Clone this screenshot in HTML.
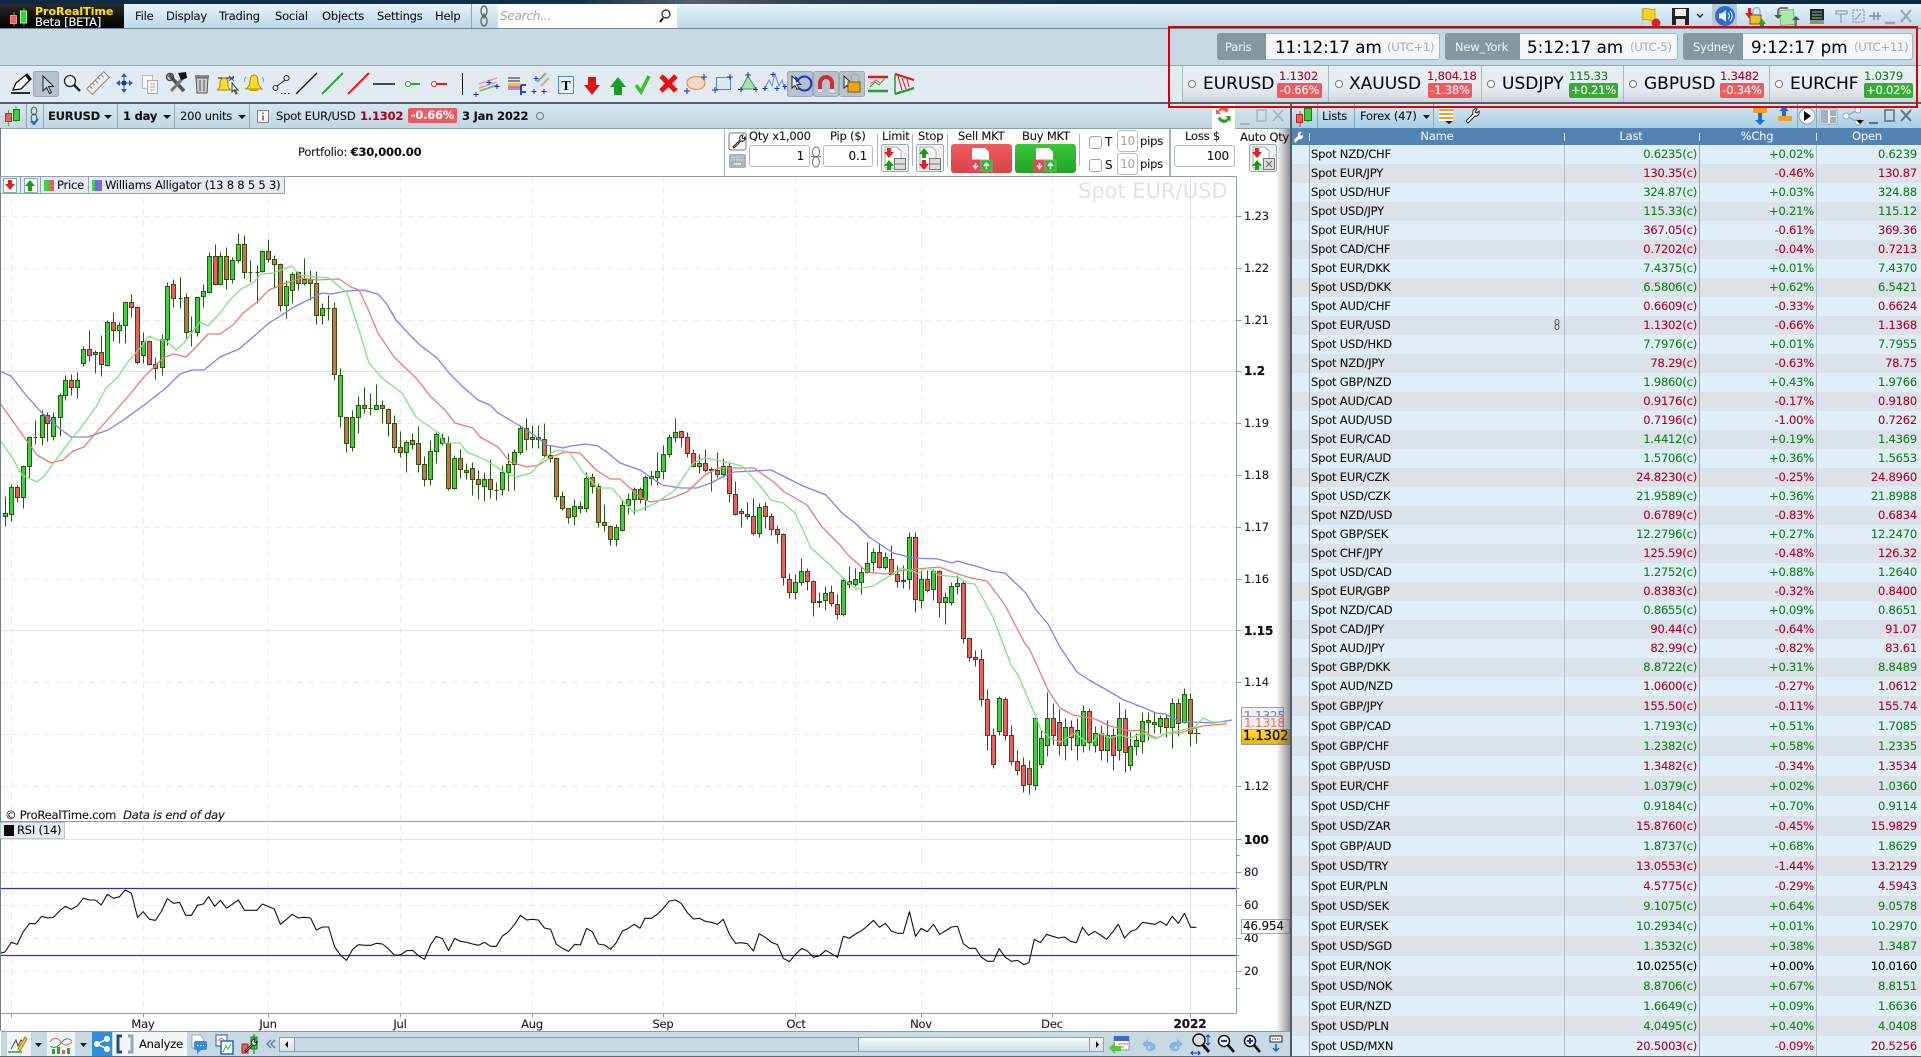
<!DOCTYPE html>
<html><head><meta charset="utf-8"><title>ProRealTime</title>
<style>
html,body{margin:0;padding:0;background:#fff}
body{width:1921px;height:1057px;position:relative;overflow:hidden;font:11.5px/14px "DejaVu Sans",sans-serif;letter-spacing:-.2px;-webkit-text-stroke:.1px;color:#111}
.b{position:absolute}
.t{position:absolute;white-space:nowrap;line-height:14px}
.sep{position:absolute;width:1px;background:#8fa6b4}
.inp{position:absolute;background:#fff;border:1px solid #b4bcc2;border-radius:3px;box-sizing:border-box;text-align:right;padding-right:5px;line-height:20px;font-size:12px}
.ck{position:absolute;background:#fff;border:1px solid #a0a8ae;border-radius:3px;box-sizing:border-box;width:13px;height:13px}
.r{position:relative;height:19px;line-height:19px;background:#e0eff7;width:629px}
.r:nth-child(even){background:#dce2e9}
.r:nth-child(n+30){height:20px;line-height:20px}
.r span{position:absolute;top:0;white-space:nowrap}
.n{left:19px;color:#111}
.x{right:224px}.y{right:107px}.z{right:4px}
.g span.x,.g span.y,.g span.z{color:#14801a}
.d span.x,.d span.y,.d span.z{color:#b40022}
.k span.x,.k span.y,.k span.z{color:#000}
.pr{color:#fff;border-radius:2px;text-align:center;position:absolute;height:15px;line-height:15px;box-sizing:border-box}
.rd{background:#ee5a5f}.gn{background:#35ad35}
.tk{position:absolute;font-size:16.7px;line-height:20px;white-space:nowrap;color:#0a0a14;letter-spacing:0}
.ax{position:absolute;left:1244px;color:#22102e;line-height:14px}
.bx{font-weight:bold;font-size:12px;color:#111;letter-spacing:-.1px;-webkit-text-stroke:.25px}
.mo{position:absolute;top:1017px;line-height:14px;transform:translateX(-50%);color:#22102e}
</style></head><body>

<!-- top strip -->
<div class="b" style="left:0;top:0;width:1921px;height:4px;background:linear-gradient(90deg,#0c2a44 0,#12304a 30%,#55606c 36%,#30404f 42%,#0e2c46 60%,#0d2a42 100%)"></div>
<!-- menu bar -->
<div class="b" style="left:0;top:4px;width:1921px;height:24px;background:linear-gradient(#e6f4fb,#bdd8e6)"></div>
<div class="b" style="left:0;top:4px;width:124px;height:24px;background:linear-gradient(#2a2a2a,#000)"></div>
<div class="b" style="left:0;top:28px;width:1921px;height:1px;background:#6f8796"></div>
<div class="b" style="left:498px;top:4px;width:179px;height:24px;background:#fff"></div>
<div class="sep" style="left:471px;top:4px;height:24px"></div>
<!-- empty bar + toolbar -->
<div class="b" style="left:0;top:29px;width:1921px;height:36px;background:#c7d9e3"></div>
<div class="b" style="left:0;top:65px;width:1921px;height:1px;background:#94a6b1"></div>
<div class="b" style="left:0;top:66px;width:1921px;height:36px;background:#e3ebf2"></div>
<div class="b" style="left:0;top:102px;width:1921px;height:2px;background:#4f5e69"></div>
<!-- ticker bg -->
<div class="b" style="left:1182px;top:66px;width:739px;height:36px;background:linear-gradient(#e7eef3 60%,#cdd5db)"></div>
<div class="sep" style="left:1182px;top:66px;height:36px;background:#aab8c1"></div>
<div class="sep" style="left:1328px;top:66px;height:36px;background:#aab8c1"></div>
<div class="sep" style="left:1481px;top:66px;height:36px;background:#aab8c1"></div>
<div class="sep" style="left:1623px;top:66px;height:36px;background:#aab8c1"></div>
<div class="sep" style="left:1769px;top:66px;height:36px;background:#aab8c1"></div>
<!-- clocks -->
<div class="b" style="left:1217px;top:33px;width:223px;height:27px;background:#f4f7f9;border:1px solid #a8b5bd;border-radius:3px;box-sizing:border-box"></div>
<div class="b" style="left:1217px;top:33px;width:49px;height:27px;background:#85979f;border-radius:3px 0 0 3px"></div>
<div class="b" style="left:1445px;top:33px;width:233px;height:27px;background:#f4f7f9;border:1px solid #a8b5bd;border-radius:3px;box-sizing:border-box"></div>
<div class="b" style="left:1445px;top:33px;width:75px;height:27px;background:#85979f;border-radius:3px 0 0 3px"></div>
<div class="b" style="left:1683px;top:33px;width:230px;height:27px;background:#f4f7f9;border:1px solid #a8b5bd;border-radius:3px;box-sizing:border-box"></div>
<div class="b" style="left:1683px;top:33px;width:60px;height:27px;background:#85979f;border-radius:3px 0 0 3px"></div>
<!-- chart tab bar -->
<div class="b" style="left:0;top:104px;width:1290px;height:24px;background:linear-gradient(#d6e6ee,#c2d7e2)"></div>
<div class="b" style="left:0;top:128px;width:1290px;height:1px;background:#8ba2b0"></div>
<div class="b" style="left:1212px;top:104px;width:23px;height:25px;background:#fff"></div>
<div class="sep" style="left:26px;top:104px;height:24px"></div><div class="sep" style="left:43px;top:104px;height:24px"></div>
<div class="sep" style="left:117px;top:104px;height:24px"></div><div class="sep" style="left:174px;top:104px;height:24px"></div><div class="sep" style="left:249px;top:104px;height:24px"></div>

<!-- chart -->
<svg class="b" style="left:0;top:0" width="1921" height="1057" viewBox="0 0 1921 1057">
<g stroke="#e9e9ee" stroke-width="1" stroke-dasharray="6 5" fill="none" transform="translate(.5,.5)">
<path d="M0 216H1236M0 268H1236M0 320H1236M0 423H1236M0 475H1236M0 527H1236M0 579H1236M0 682H1236M0 734H1236M0 786H1236"/>
<path d="M0 872H1236M0 905H1236M0 938H1236M0 971H1236"/>
<path d="M11 176V1013M143 176V1013M268 176V1013M400 176V1013M532 176V1013M663 176V1013M795 176V1013M921 176V1013M1052 176V1013"/>
</g>
<g stroke="#e0e0ea" fill="none" transform="translate(.5,.5)"><path d="M0 371H1236M0 630H1236M0 839H1236M1190 176V1013"/></g>

<!-- wicks -->
<g transform="translate(.5,.5)">
<path fill="none" stroke="#265a10" stroke-width="1" d="M5 496V526M11 484V521M17 485V502M23 465V508M29 436V478M35 420V444M33 437h4M42 410V445M47 412V441M53 412V440M60 393V436M65 375V400M71 374V395M77 372V398M83 346V366M89 330V361M95 350V373M101 335V376M107 320V366M113 312V341M119 322V343M125 302V343M131 294V317M137 306V364M143 332V363M149 340V365M155 357V379M162 334V375M167 282V345M173 279V307M180 277V308M178 298h4M186 293V338M191 316V346M189 331h4M197 297V336M203 284V307M209 252V293M215 244V285M220 252V285M226 247V289M232 257V283M238 233V263M244 235V278M250 260V282M248 272h4M257 265V303M255 272h4M262 250V272M268 239V262M274 255V287M280 263V311M286 280V318M292 272V303M298 271V290M304 258V285M310 270V300M316 271V324M322 303V324M328 295V320M326 308h4M334 302V380M340 368V427M346 417V452M352 410V451M358 396V433M364 387V413M370 393V415M368 408h4M376 384V409M382 400V423M388 408V436M394 415V452M400 431V457M406 440V472M412 433V449M418 426V472M424 456V486M430 440V485M436 432V463M442 433V445M448 436V490M454 455V489M460 449V478M466 463V479M472 462V495M478 470V499M484 472V501M490 459V498M496 482V500M494 490h4M502 465V495M508 453V491M514 449V490M520 425V454M526 418V450M532 425V448M538 425V448M544 423V458M550 445V462M556 457V500M562 491V510M568 508V523M574 499V525M580 501V513M586 472V512M592 473V493M598 483V527M604 504V531M610 525V545M616 524V546M622 500V531M628 493V514M634 487V514M640 487V503M645 475V510M651 470V485M657 452V485M663 445V479M669 434V457M675 418V442M681 430V447M687 432V457M693 449V467M699 454V473M705 449V472M711 467V491M717 452V477M723 458V477M729 463V502M735 481V515M741 508V527M747 502V519M753 498V535M759 503V537M765 502V528M771 513V535M777 525V543M783 533V585M789 573V598M795 574V599M801 558V585M807 568V590M813 580V616M819 592V607M825 586V610M831 585V606M837 594V619M843 579V616M849 566V588M855 568V586M861 567V594M867 542V573M873 548V571M879 543V568M885 552V569M891 545V575M897 565V587M903 565V588M909 532V589M915 532V612M921 570V608M927 570V592M933 569V600M939 570V617M945 592V624M951 582V605M957 575V594M963 581V643M969 637V661M975 650V666M981 649V706M987 689V750M993 728V768M999 696V735M1005 697V740M1011 725V765M1017 750V775M1023 757V792M1029 760V794M1035 718V790M1041 730V768M1047 692V756M1053 703V745M1059 709V755M1065 718V760M1071 720V750M1077 718V760M1083 705V752M1089 708V750M1095 726V752M1101 725V760M1107 720V762M1113 728V770M1119 702V760M1125 709V772M1130 732V770M1136 733V755M1142 712V753M1148 712V740M1154 712V733M1160 715V733M1166 715V737M1172 698V748M1178 698V736M1184 688V723M1190 693V746M1196 728V743M1193 733h7"/>
<!-- green bodies -->
<path fill="#3ecf3e" stroke="#265a10" d="M3 513h4V516h-4zM9 487h4V514h-4zM21 466h4V497h-4zM27 437h4V466h-4zM40 415h4V437h-4zM51 417h4V436h-4zM58 395h4V417h-4zM63 380h4V395h-4zM75 380h4V387h-4zM81 349h4V363h-4zM93 352h4V354h-4zM105 322h4V365h-4zM117 325h4V330h-4zM123 302h4V325h-4zM141 341h4V355h-4zM160 339h4V367h-4zM165 286h4V339h-4zM195 297h4V332h-4zM201 291h4V296h-4zM207 256h4V292h-4zM218 256h4V284h-4zM230 260h4V279h-4zM236 244h4V260h-4zM260 251h4V271h-4zM284 286h4V305h-4zM290 274h4V290h-4zM302 279h4V283h-4zM320 308h4V315h-4zM338 375h4V416h-4zM350 417h4V447h-4zM356 405h4V417h-4zM374 405h4V409h-4zM404 442h4V452h-4zM428 451h4V479h-4zM434 434h4V451h-4zM452 458h4V488h-4zM482 479h4V486h-4zM500 472h4V489h-4zM506 464h4V472h-4zM512 452h4V464h-4zM518 428h4V452h-4zM530 437h4V439h-4zM572 506h4V516h-4zM584 478h4V508h-4zM614 527h4V539h-4zM620 505h4V530h-4zM626 499h4V505h-4zM632 489h4V499h-4zM643 477h4V499h-4zM649 476h4V478h-4zM655 471h4V477h-4zM661 454h4V471h-4zM667 437h4V454h-4zM673 432h4V437h-4zM697 463h4V466h-4zM721 466h4V474h-4zM757 507h4V533h-4zM793 582h4V592h-4zM799 571h4V582h-4zM817 601h4V602h-4zM823 593h4V600h-4zM841 580h4V614h-4zM853 579h4V584h-4zM859 572h4V582h-4zM865 563h4V572h-4zM871 552h4V562h-4zM883 557h4V567h-4zM901 580h4V581h-4zM907 537h4V579h-4zM919 579h4V600h-4zM931 571h4V589h-4zM943 597h4V602h-4zM949 586h4V602h-4zM955 583h4V586h-4zM997 698h4V731h-4zM1033 718h4V785h-4zM1039 738h4V764h-4zM1045 718h4V745h-4zM1063 727h4V745h-4zM1075 730h4V745h-4zM1081 711h4V745h-4zM1093 733h4V745h-4zM1105 735h4V750h-4zM1117 718h4V750h-4zM1128 746h4V765h-4zM1134 740h4V746h-4zM1140 721h4V741h-4zM1158 718h4V726h-4zM1170 703h4V727h-4zM1182 694h4V722h-4z"/>
<!-- red bodies -->
<path fill="#e8605c" stroke="#265a10" d="M15 487h4V497h-4zM45 415h4V423h-4zM69 380h4V387h-4zM87 349h4V355h-4zM99 352h4V364h-4zM111 322h4V330h-4zM129 302h4V307h-4zM135 307h4V362h-4zM147 341h4V364h-4zM153 364h4V368h-4zM171 284h4V298h-4zM184 297h4V332h-4zM213 256h4V284h-4zM224 256h4V279h-4zM242 244h4V272h-4zM266 251h4V259h-4zM272 259h4V264h-4zM278 264h4V305h-4zM296 272h4V283h-4zM308 279h4V283h-4zM314 283h4V315h-4zM332 308h4V374h-4zM344 417h4V443h-4zM362 405h4V408h-4zM380 405h4V408h-4zM386 409h4V423h-4zM392 423h4V447h-4zM398 447h4V452h-4zM410 440h4V444h-4zM416 443h4V464h-4zM422 464h4V479h-4zM440 438h4V443h-4zM446 443h4V488h-4zM458 458h4V469h-4zM464 470h4V472h-4zM470 468h4V479h-4zM476 479h4V484h-4zM488 479h4V489h-4zM524 428h4V439h-4zM536 437h4V439h-4zM542 439h4V455h-4zM548 455h4V458h-4zM554 458h4V496h-4zM560 496h4V508h-4zM566 508h4V517h-4zM578 506h4V508h-4zM590 477h4V486h-4zM596 486h4V522h-4zM602 522h4V525h-4zM608 526h4V539h-4zM638 489h4V499h-4zM679 431h4V437h-4zM685 437h4V453h-4zM691 453h4V466h-4zM703 463h4V470h-4zM709 469h4V470h-4zM715 470h4V474h-4zM727 466h4V493h-4zM733 494h4V514h-4zM739 511h4V513h-4zM745 514h4V516h-4zM751 516h4V533h-4zM763 506h4V516h-4zM769 516h4V529h-4zM775 529h4V534h-4zM781 534h4V577h-4zM787 579h4V592h-4zM805 571h4V581h-4zM811 581h4V602h-4zM829 592h4V603h-4zM835 604h4V614h-4zM847 581h4V584h-4zM877 552h4V567h-4zM889 559h4V574h-4zM895 574h4V581h-4zM913 537h4V599h-4zM925 579h4V590h-4zM937 571h4V602h-4zM961 583h4V638h-4zM967 638h4V657h-4zM973 657h4V659h-4zM979 659h4V699h-4zM985 699h4V735h-4zM991 735h4V764h-4zM1003 699h4V735h-4zM1009 735h4V761h-4zM1015 761h4V770h-4zM1021 765h4V785h-4zM1027 768h4V784h-4zM1051 718h4V735h-4zM1057 722h4V745h-4zM1069 727h4V737h-4zM1087 711h4V742h-4zM1099 733h4V750h-4zM1111 735h4V755h-4zM1123 718h4V752h-4zM1146 720h4V722h-4zM1152 722h4V724h-4zM1164 718h4V727h-4zM1176 703h4V723h-4zM1188 699h4V733h-4z"/>
</g>

<!-- alligator -->
<g fill="none" stroke-width="1.3" stroke-linejoin="round">
<polyline stroke="#8080ec" points="0,371 11,376 25,394 41,412 59,428 71,437 88,437 108,430 122,421 147,403 167,387 180,374 192,370 204,370 220,357 239,349 253,337 269,323 282,315 294,307 306,301 322,293 331,294 347,291 363,290 378,294 386,303 396,320 408,333 420,345 437,358 449,373 463,387 478,400 490,405 498,413 510,420 527,430 547,445 563,448 571,446 586,444 598,446 608,453 620,463 640,470 652,478 662,485 681,488 697,488 711,483 726,475 734,472 771,470 803,486 826,495 842,513 856,524 869,537 881,545 893,553 913,558 938,559 952,563 958,561 964,563 979,567 991,571 1005,573 1026,593 1036,610 1048,624 1060,647 1077,672 1089,680 1105,689 1124,700 1142,707 1156,713 1165,714 1180,722 1193,722 1213,723 1232,720"/>
<polyline stroke="#ea7a78" points="0,403 12,420 24,437 37,455 51,463 63,460 73,451 84,447 94,435 110,417 131,393 143,378 163,358 173,354 186,357 196,347 208,334 220,334 233,325 243,313 257,302 269,290 286,283 302,278 316,280 339,279 351,287 359,290 367,307 378,333 394,357 416,378 431,397 445,410 455,423 473,428 480,437 498,447 510,462 527,467 539,465 551,457 565,452 580,453 596,470 610,479 620,479 640,497 650,502 669,499 687,492 705,475 718,468 754,468 775,483 783,491 807,505 822,527 840,545 848,555 867,572 885,574 905,570 939,567 958,574 971,578 987,581 1005,605 1024,642 1030,650 1048,690 1060,708 1073,715 1095,719 1110,726 1130,731 1143,730 1150,735 1157,738 1167,733 1180,733 1190,730 1202,726 1212,725 1227,724"/>
<polyline stroke="#78e678" points="0,440 12,457 22,475 37,482 45,475 61,453 73,437 80,429 96,407 106,388 118,377 127,363 141,347 149,336 157,340 165,340 176,350 184,343 200,322 208,326 220,313 229,301 241,289 253,283 261,274 273,273 292,266 300,275 318,277 329,278 347,293 359,330 369,363 382,378 402,393 416,417 420,420 439,433 443,443 460,443 467,452 486,460 504,472 516,477 531,473 545,457 557,450 569,452 584,473 598,488 612,488 624,502 633,512 640,510 656,503 675,490 693,463 705,458 722,461 742,466 762,488 771,500 783,503 795,513 811,548 828,563 842,577 856,589 873,586 893,574 901,568 918,573 928,567 938,575 958,577 967,583 975,584 993,617 1011,665 1018,675 1036,717 1041,730 1050,738 1060,742 1075,733 1090,745 1100,733 1110,738 1120,735 1130,738 1143,733 1155,739 1167,733 1182,730 1195,727 1203,718 1212,722 1227,722"/>
</g>

<!-- RSI -->
<path d="M0 888.5H1236M0 955.5H1236" stroke="#2a2ad8" stroke-width="1.3" fill="none"/>
<g fill="none" stroke="#111" stroke-width="1.1" stroke-linejoin="round">
<polyline vector-effect="non-scaling-stroke" transform="translate(0,800) scale(.40816,.33333)" points="0,460 12,456 28,427 42,433 57,395 72,371 87,371 102,349 116,354 131,352 146,333 160,319 175,328 190,317 204,295 219,300 234,300 248,315 263,283 278,295 293,290 307,270 322,280 337,352 351,335 366,358 381,361 396,333 410,296 425,310 440,307 455,346 469,346 484,316 498,312 511,290 526,319 540,301 555,325 569,313 584,300 599,331 614,331 629,331 643,312 658,320 672,327 687,373 702,358 716,343 731,354 746,352 761,354 775,390 790,381 805,381 820,441 834,465 849,481 864,448 878,434 893,436 908,436 922,430 937,432 952,447 966,465 981,465 996,452 1011,451 1025,467 1040,478 1055,434 1069,409 1084,416 1099,452 1114,415 1128,424 1143,427 1158,432 1172,436 1187,427 1202,439 1216,439 1231,408 1246,395 1261,373 1275,346 1290,360 1304,358 1319,360 1334,384 1349,388 1363,433 1378,445 1393,454 1408,433 1422,435 1437,385 1451,395 1466,432 1481,435 1496,448 1510,428 1525,393 1539,385 1554,373 1568,385"/>
<polyline vector-effect="non-scaling-stroke" transform="translate(640,800) scale(.40816,.33333)" points="0,385 12,355 28,355 43,342 57,325 72,303 87,300 101,310 116,338 131,357 146,355 160,364 175,367 190,373 204,358 219,403 234,430 248,428 263,431 278,453 292,401 307,412 322,427 337,434 351,475 366,485 381,463 396,445 410,453 425,472 440,467 455,451 469,461 484,472 498,409 513,415 528,402 543,392 557,378 572,361 587,382 601,370 616,393 631,400 645,400 660,335 675,409 689,385 704,395 719,373 734,403 748,393 763,381 778,379 792,431 807,445 822,445 836,471 851,484 866,484 880,446 895,472 910,484 925,481 940,494 953,488 966,418 981,428 996,403 1011,409 1025,414 1040,411 1055,424 1069,428 1084,382 1099,406 1114,394 1128,405 1143,418 1158,396 1172,373 1187,414 1202,394 1216,388 1231,367 1246,370 1261,373 1275,364 1290,376 1304,349 1319,370 1334,340 1349,382 1363,382"/>
</g>

<!-- panel lines / axis -->
<g fill="none" stroke="#8f9ea8" transform="translate(.5,.5)">
<path d="M0 176H1236M0 821H1236M0 1013H1236M1236 176V1013"/>
<path d="M1236 216h5M1236 268h5M1236 320h5M1236 371h5M1236 423h5M1236 475h5M1236 527h5M1236 579h5M1236 630h5M1236 682h5M1236 786h5M1236 839h5M1236 855h3M1236 872h5M1236 888h3M1236 905h5M1236 938h5M1236 955h3M1236 971h5M1236 988h3M11 1013v4M143 1013v4M268 1013v4M400 1013v4M532 1013v4M663 1013v4M795 1013v4M921 1013v4M1052 1013v4M1190 1013v4"/>
</g>
<path d="M.5 128V1031" stroke="#6f7f8a" fill="none"/>
</svg>

<!-- chart text -->
<div class="t" style="left:1078px;top:177px;font-size:21px;line-height:28px;color:#dfe3ea;letter-spacing:0">Spot EUR/USD</div>
<div class="t" style="left:298px;top:145px;">Portfolio: <b>€30,000.00</b></div>

<!-- legend -->
<div class="b" style="left:0;top:176px;width:285px;height:18px;background:#e4ecf1;border:1px solid #8fa3b0;box-sizing:border-box"></div>
<div class="b" style="left:44px;top:180px;width:5px;height:11px;background:#4ccc4c"></div><div class="b" style="left:49px;top:180px;width:5px;height:11px;background:#e8605c"></div>
<div class="sep" style="left:40px;top:177px;height:16px"></div><div class="sep" style="left:20px;top:177px;height:16px"></div>
<div class="sep" style="left:88px;top:177px;height:16px"></div>
<div class="b" style="left:92px;top:180px;width:3px;height:11px;background:#4ccc4c"></div><div class="b" style="left:95px;top:180px;width:4px;height:11px;background:#6a6ae8"></div><div class="b" style="left:99px;top:180px;width:3px;height:11px;background:#a060c0"></div>
<div class="t" style="left:57px;top:178px">Price</div>
<div class="t" style="left:105px;top:178px;">Williams Alligator (13 8 8 5 5 3)</div>

<div class="t" style="left:5px;top:808px">© ProRealTime.com&nbsp; <i>Data is end of day</i></div>
<div class="b" style="left:0;top:822px;width:65px;height:17px;background:#e4ecf1;border:1px solid #b6c5cf;box-sizing:border-box"></div>
<div class="b" style="left:4px;top:825px;width:10px;height:11px;background:#000"></div>
<div class="t" style="left:17px;top:823px">RSI (14)</div>

<!-- axis labels -->
<div class="ax" style="top:209px">1.23</div><div class="ax" style="top:261px">1.22</div><div class="ax" style="top:313px">1.21</div>
<div class="ax bx" style="top:364px">1.2</div>
<div class="ax" style="top:416px">1.19</div><div class="ax" style="top:468px">1.18</div><div class="ax" style="top:520px">1.17</div><div class="ax" style="top:572px">1.16</div>
<div class="ax bx" style="top:624px">1.15</div>
<div class="ax" style="top:675px">1.14</div><div class="ax" style="top:779px">1.12</div>
<div class="ax bx" style="top:833px">100</div>
<div class="ax" style="top:865px">80</div><div class="ax" style="top:898px">60</div><div class="ax" style="top:931px">40</div><div class="ax" style="top:964px">20</div>
<div class="b" style="left:1241px;top:707px;width:43px;height:11px;background:#f2f2fa;border:1px solid #99a6b0;box-sizing:border-box;overflow:hidden;color:#7a7ae8;font-size:12px;line-height:16px;padding-left:2px">1.1325</div>
<div class="b" style="left:1241px;top:716px;width:43px;height:14px;background:#fbeeee;border:1px solid #99a6b0;box-sizing:border-box;color:#ea7a78;font-size:12px;line-height:13px;padding-left:2px">1.1318</div>
<div class="b" style="left:1241px;top:729px;width:49px;height:16px;background:linear-gradient(#ffdd33,#eeb400);border:1px solid #8f9ea8;box-sizing:border-box;color:#000;font-size:13px;line-height:14px;padding-left:1px;letter-spacing:0;-webkit-text-stroke:.3px #000">1.1302</div>
<div class="b" style="left:1241px;top:919px;width:49px;height:15px;background:#fff;border:1px solid #a0adb6;box-sizing:border-box;font-size:12px;line-height:13px;padding-left:1px;overflow:hidden">46.954</div>
<div class="mo" style="left:143px">May</div><div class="mo" style="left:268px">Jun</div><div class="mo" style="left:400px">Jul</div><div class="mo" style="left:532px">Aug</div><div class="mo" style="left:663px">Sep</div><div class="mo" style="left:796px">Oct</div><div class="mo" style="left:921px">Nov</div><div class="mo" style="left:1052px">Dec</div><div class="mo bx" style="left:1190px">2022</div>

<!-- shadow -->
<div class="b" style="left:1276px;top:129px;width:14px;height:928px;background:linear-gradient(90deg,rgba(120,120,120,0),rgba(90,90,90,.65))"></div>

<!-- order panel -->
<div class="sep" style="left:724px;top:129px;height:47px;background:#a8b6bf"></div>
<div class="sep" style="left:877px;top:134px;height:32px;background:#a8b6bf"></div>
<div class="sep" style="left:912px;top:134px;height:32px;background:#a8b6bf"></div>
<div class="sep" style="left:947px;top:134px;height:32px;background:#a8b6bf"></div>
<div class="sep" style="left:1079px;top:134px;height:32px;background:#a8b6bf"></div>
<div class="b" style="left:1169px;top:129px;width:2px;height:47px;background:#a8b6bf"></div>
<div class="t" style="left:749px;top:129px">Qty x1,000</div>
<div class="t" style="left:830px;top:129px">Pip ($)</div>
<div class="t" style="left:882px;top:129px">Limit</div>
<div class="t" style="left:918px;top:129px">Stop</div>
<div class="t" style="left:958px;top:129px">Sell MKT</div>
<div class="t" style="left:1022px;top:129px">Buy MKT</div>
<div class="t" style="left:1185px;top:129px">Loss $</div>
<div class="t" style="left:1240px;top:130px">Auto Qty</div>
<div class="inp" style="left:749px;top:145px;width:61px;height:22px">1</div>
<div class="inp" style="left:823px;top:145px;width:50px;height:22px">0.1</div>
<div class="inp" style="left:1174px;top:145px;width:61px;height:22px">100</div>
<div class="b" style="left:951px;top:144px;width:61px;height:29px;border-radius:3px;background:linear-gradient(#f05c60,#d84248)"></div>
<div class="b" style="left:1015px;top:144px;width:61px;height:29px;border-radius:3px;background:linear-gradient(#3ac63a,#22a422)"></div>
<div class="ck" style="left:1089px;top:136px"></div><div class="t" style="left:1105px;top:135px;font-size:12px">T</div>
<div class="ck" style="left:1089px;top:159px"></div><div class="t" style="left:1105px;top:158px;font-size:12px">S</div>
<div class="inp" style="left:1117px;top:130px;width:21px;height:22px;padding:0;text-align:center;color:#aaa;">10</div>
<div class="inp" style="left:1117px;top:153px;width:21px;height:22px;padding:0;text-align:center;color:#aaa;">10</div>
<div class="t" style="left:1140px;top:134px">pips</div><div class="t" style="left:1140px;top:157px">pips</div>

<!-- tab bar text -->
<div class="t" style="left:48px;top:109px;font-weight:bold;font-size:11.5px;">EURUSD</div>
<div class="t" style="left:123px;top:109px;font-weight:bold;font-size:11.5px;">1 day</div>
<div class="t" style="left:180px;top:109px">200 units</div>
<div class="t" style="left:276px;top:109px">Spot EUR/USD</div>
<div class="t" style="left:360px;top:109px;font-weight:bold;color:#a8001c">1.1302</div>
<div class="pr rd" style="left:408px;top:108px;width:49px;font-weight:bold">-0.66%</div>
<div class="t" style="left:462px;top:109px;font-weight:bold">3 Jan 2022</div>

<!-- menu text -->
<div class="t" style="left:35px;top:5px;color:#ffe000;font-weight:bold;font-size:11px;letter-spacing:0">ProRealTime</div>
<div class="t" style="left:35px;top:15px;color:#fff;">Beta [BETA]</div>
<div class="t" style="left:135px;top:9px">File</div><div class="t" style="left:166px;top:9px">Display</div><div class="t" style="left:219px;top:9px">Trading</div><div class="t" style="left:275px;top:9px">Social</div><div class="t" style="left:322px;top:9px">Objects</div><div class="t" style="left:377px;top:9px">Settings</div><div class="t" style="left:435px;top:9px">Help</div>
<div class="t" style="left:500px;top:9px;color:#aaa;font-style:italic;font-size:12px">Search...</div>

<!-- clocks text -->
<div class="t" style="left:1225px;top:40px;color:#e8eef2;">Paris</div>
<div class="t" style="left:1455px;top:40px;color:#e8eef2;">New_York</div>
<div class="t" style="left:1693px;top:40px;color:#e8eef2;">Sydney</div>
<div class="tk" style="left:1275px;top:37px">11:12:17 am</div><div class="t" style="left:1387px;top:40px;color:#aab1b8;">(UTC+1)</div>
<div class="tk" style="left:1527px;top:37px">5:12:17 am</div><div class="t" style="left:1630px;top:40px;color:#aab1b8;">(UTC-5)</div>
<div class="tk" style="left:1751px;top:37px">9:12:17 pm</div><div class="t" style="left:1854px;top:40px;color:#aab1b8;">(UTC+11)</div>

<!-- tickers -->
<div class="tk" style="left:1203px;top:74px;font-size:17px">EURUSD</div>
<div class="t" style="left:1279px;top:69px;color:#b00020">1.1302</div><div class="pr rd" style="left:1277px;top:83px;width:45px">-0.66%</div>
<div class="tk" style="left:1349px;top:74px;font-size:17px">XAUUSD</div>
<div class="t" style="left:1427px;top:69px;color:#b00020">1,804.18</div><div class="pr rd" style="left:1428px;top:83px;width:44px">-1.38%</div>
<div class="tk" style="left:1502px;top:74px;font-size:17px">USDJPY</div>
<div class="t" style="left:1569px;top:69px;color:#14801a">115.33</div><div class="pr gn" style="left:1569px;top:83px;width:49px">+0.21%</div>
<div class="tk" style="left:1644px;top:74px;font-size:17px">GBPUSD</div>
<div class="t" style="left:1720px;top:69px;color:#b00020">1.3482</div><div class="pr rd" style="left:1720px;top:83px;width:44px">-0.34%</div>
<div class="tk" style="left:1790px;top:74px;font-size:17px">EURCHF</div>
<div class="t" style="left:1864px;top:69px;color:#14801a">1.0379</div><div class="pr gn" style="left:1864px;top:83px;width:49px">+0.02%</div>

<!-- right panel -->
<div class="b" style="left:1290px;top:104px;width:2px;height:953px;background:#4e5d68"></div>
<div class="b" style="left:1292px;top:104px;width:629px;height:24px;background:linear-gradient(#d4e8f3,#a9cee3)"></div>
<div class="b" style="left:1292px;top:128px;width:629px;height:17px;background:#5283b2"></div>
<div class="sep" style="left:1317px;top:104px;height:24px;background:#86a8bd"></div><div class="sep" style="left:1354px;top:104px;height:24px;background:#86a8bd"></div><div class="sep" style="left:1433px;top:104px;height:24px;background:#86a8bd"></div><div class="sep" style="left:1797px;top:104px;height:24px;background:#86a8bd"></div><div class="sep" style="left:1816px;top:104px;height:24px;background:#86a8bd"></div>
<div class="t" style="left:1322px;top:109px">Lists</div><div class="t" style="left:1360px;top:109px">Forex (47)</div>
<div class="t" style="left:1437px;top:129px;transform:translateX(-50%);color:#e8f2fa">Name</div>
<div class="t" style="left:1631px;top:129px;transform:translateX(-50%);color:#e8f2fa">Last</div>
<div class="t" style="left:1757px;top:129px;transform:translateX(-50%);color:#e8f2fa">%Chg</div>
<div class="t" style="left:1867px;top:129px;transform:translateX(-50%);color:#e8f2fa">Open</div>
<div class="b" style="left:1309px;top:133px;width:1px;height:8px;background:#dfe9f1"></div><div class="b" style="left:1564px;top:133px;width:1px;height:8px;background:#dfe9f1"></div><div class="b" style="left:1699px;top:133px;width:1px;height:8px;background:#dfe9f1"></div><div class="b" style="left:1816px;top:133px;width:1px;height:8px;background:#dfe9f1"></div>

<div class="b" style="left:1292px;top:145px;width:629px;height:912px;overflow:hidden;background:#e0eff7">
<div class="r g"><span class="n">Spot NZD/CHF</span><span class="x">0.6235(c)</span><span class="y">+0.02%</span><span class="z">0.6239</span></div>
<div class="r d"><span class="n">Spot EUR/JPY</span><span class="x">130.35(c)</span><span class="y">-0.46%</span><span class="z">130.87</span></div>
<div class="r g"><span class="n">Spot USD/HUF</span><span class="x">324.87(c)</span><span class="y">+0.03%</span><span class="z">324.88</span></div>
<div class="r g"><span class="n">Spot USD/JPY</span><span class="x">115.33(c)</span><span class="y">+0.21%</span><span class="z">115.12</span></div>
<div class="r d"><span class="n">Spot EUR/HUF</span><span class="x">367.05(c)</span><span class="y">-0.61%</span><span class="z">369.36</span></div>
<div class="r d"><span class="n">Spot CAD/CHF</span><span class="x">0.7202(c)</span><span class="y">-0.04%</span><span class="z">0.7213</span></div>
<div class="r g"><span class="n">Spot EUR/DKK</span><span class="x">7.4375(c)</span><span class="y">+0.01%</span><span class="z">7.4370</span></div>
<div class="r g"><span class="n">Spot USD/DKK</span><span class="x">6.5806(c)</span><span class="y">+0.62%</span><span class="z">6.5421</span></div>
<div class="r d"><span class="n">Spot AUD/CHF</span><span class="x">0.6609(c)</span><span class="y">-0.33%</span><span class="z">0.6624</span></div>
<div class="r d"><span class="n">Spot EUR/USD</span><span class="x">1.1302(c)</span><span class="y">-0.66%</span><span class="z">1.1368</span></div>
<div class="r g"><span class="n">Spot USD/HKD</span><span class="x">7.7976(c)</span><span class="y">+0.01%</span><span class="z">7.7955</span></div>
<div class="r d"><span class="n">Spot NZD/JPY</span><span class="x">78.29(c)</span><span class="y">-0.63%</span><span class="z">78.75</span></div>
<div class="r g"><span class="n">Spot GBP/NZD</span><span class="x">1.9860(c)</span><span class="y">+0.43%</span><span class="z">1.9766</span></div>
<div class="r d"><span class="n">Spot AUD/CAD</span><span class="x">0.9176(c)</span><span class="y">-0.17%</span><span class="z">0.9180</span></div>
<div class="r d"><span class="n">Spot AUD/USD</span><span class="x">0.7196(c)</span><span class="y">-1.00%</span><span class="z">0.7262</span></div>
<div class="r g"><span class="n">Spot EUR/CAD</span><span class="x">1.4412(c)</span><span class="y">+0.19%</span><span class="z">1.4369</span></div>
<div class="r g"><span class="n">Spot EUR/AUD</span><span class="x">1.5706(c)</span><span class="y">+0.36%</span><span class="z">1.5653</span></div>
<div class="r d"><span class="n">Spot EUR/CZK</span><span class="x">24.8230(c)</span><span class="y">-0.25%</span><span class="z">24.8960</span></div>
<div class="r g"><span class="n">Spot USD/CZK</span><span class="x">21.9589(c)</span><span class="y">+0.36%</span><span class="z">21.8988</span></div>
<div class="r d"><span class="n">Spot NZD/USD</span><span class="x">0.6789(c)</span><span class="y">-0.83%</span><span class="z">0.6834</span></div>
<div class="r g"><span class="n">Spot GBP/SEK</span><span class="x">12.2796(c)</span><span class="y">+0.27%</span><span class="z">12.2470</span></div>
<div class="r d"><span class="n">Spot CHF/JPY</span><span class="x">125.59(c)</span><span class="y">-0.48%</span><span class="z">126.32</span></div>
<div class="r g"><span class="n">Spot USD/CAD</span><span class="x">1.2752(c)</span><span class="y">+0.88%</span><span class="z">1.2640</span></div>
<div class="r d"><span class="n">Spot EUR/GBP</span><span class="x">0.8383(c)</span><span class="y">-0.32%</span><span class="z">0.8400</span></div>
<div class="r g"><span class="n">Spot NZD/CAD</span><span class="x">0.8655(c)</span><span class="y">+0.09%</span><span class="z">0.8651</span></div>
<div class="r d"><span class="n">Spot CAD/JPY</span><span class="x">90.44(c)</span><span class="y">-0.64%</span><span class="z">91.07</span></div>
<div class="r d"><span class="n">Spot AUD/JPY</span><span class="x">82.99(c)</span><span class="y">-0.82%</span><span class="z">83.61</span></div>
<div class="r g"><span class="n">Spot GBP/DKK</span><span class="x">8.8722(c)</span><span class="y">+0.31%</span><span class="z">8.8489</span></div>
<div class="r d"><span class="n">Spot AUD/NZD</span><span class="x">1.0600(c)</span><span class="y">-0.27%</span><span class="z">1.0612</span></div>
<div class="r d"><span class="n">Spot GBP/JPY</span><span class="x">155.50(c)</span><span class="y">-0.11%</span><span class="z">155.74</span></div>
<div class="r g"><span class="n">Spot GBP/CAD</span><span class="x">1.7193(c)</span><span class="y">+0.51%</span><span class="z">1.7085</span></div>
<div class="r g"><span class="n">Spot GBP/CHF</span><span class="x">1.2382(c)</span><span class="y">+0.58%</span><span class="z">1.2335</span></div>
<div class="r d"><span class="n">Spot GBP/USD</span><span class="x">1.3482(c)</span><span class="y">-0.34%</span><span class="z">1.3534</span></div>
<div class="r g"><span class="n">Spot EUR/CHF</span><span class="x">1.0379(c)</span><span class="y">+0.02%</span><span class="z">1.0360</span></div>
<div class="r g"><span class="n">Spot USD/CHF</span><span class="x">0.9184(c)</span><span class="y">+0.70%</span><span class="z">0.9114</span></div>
<div class="r d"><span class="n">Spot USD/ZAR</span><span class="x">15.8760(c)</span><span class="y">-0.45%</span><span class="z">15.9829</span></div>
<div class="r g"><span class="n">Spot GBP/AUD</span><span class="x">1.8737(c)</span><span class="y">+0.68%</span><span class="z">1.8629</span></div>
<div class="r d"><span class="n">Spot USD/TRY</span><span class="x">13.0553(c)</span><span class="y">-1.44%</span><span class="z">13.2129</span></div>
<div class="r d"><span class="n">Spot EUR/PLN</span><span class="x">4.5775(c)</span><span class="y">-0.29%</span><span class="z">4.5943</span></div>
<div class="r g"><span class="n">Spot USD/SEK</span><span class="x">9.1075(c)</span><span class="y">+0.64%</span><span class="z">9.0578</span></div>
<div class="r g"><span class="n">Spot EUR/SEK</span><span class="x">10.2934(c)</span><span class="y">+0.01%</span><span class="z">10.2970</span></div>
<div class="r g"><span class="n">Spot USD/SGD</span><span class="x">1.3532(c)</span><span class="y">+0.38%</span><span class="z">1.3487</span></div>
<div class="r k"><span class="n">Spot EUR/NOK</span><span class="x">10.0255(c)</span><span class="y">+0.00%</span><span class="z">10.0160</span></div>
<div class="r g"><span class="n">Spot USD/NOK</span><span class="x">8.8706(c)</span><span class="y">+0.67%</span><span class="z">8.8151</span></div>
<div class="r g"><span class="n">Spot EUR/NZD</span><span class="x">1.6649(c)</span><span class="y">+0.09%</span><span class="z">1.6636</span></div>
<div class="r g"><span class="n">Spot USD/PLN</span><span class="x">4.0495(c)</span><span class="y">+0.40%</span><span class="z">4.0408</span></div>
<div class="r d"><span class="n">Spot USD/MXN</span><span class="x">20.5003(c)</span><span class="y">-0.09%</span><span class="z">20.5256</span></div>
</div>
<div class="b" style="left:1309px;top:145px;width:1px;height:911px;background:#98a4ad"></div>
<div class="b" style="left:1564px;top:145px;width:1px;height:911px;background:#b4c0c8"></div>
<div class="b" style="left:1699px;top:145px;width:1px;height:911px;background:#98a4ad"></div>
<div class="b" style="left:1816px;top:145px;width:1px;height:911px;background:#b4c0c8"></div>
<div class="b" style="left:1292px;top:1056px;width:629px;height:1px;background:#5d6c77"></div>

<!-- bottom bar -->
<div class="b" style="left:1px;top:1031px;width:1289px;height:26px;background:#c7d9e3"></div>
<div class="b" style="left:1px;top:1031px;width:1289px;height:1px;background:#8a9ba6"></div>
<div class="b" style="left:0;top:1056px;width:1290px;height:1px;background:#5d6c77"></div>
<div class="b" style="left:7px;top:1032px;width:24px;height:24px;background:#eef4f7"></div>
<div class="b" style="left:47px;top:1032px;width:28px;height:24px;background:#eef4f7"></div>
<div class="b" style="left:92px;top:1032px;width:20px;height:24px;background:#2e90dd"></div>
<div class="b" style="left:113px;top:1032px;width:74px;height:24px;background:#f2f6f9"></div>
<div class="t" style="left:139px;top:1037px;">Analyze</div>
<div class="b" style="left:279px;top:1037px;width:825px;height:15px;border:1px solid #8ea2ae;box-sizing:border-box;border-radius:2px;background:#c7d9e3"></div>
<div class="b" style="left:279px;top:1037px;width:16px;height:15px;background:linear-gradient(#f4f8fb,#d5e2ea);border:1px solid #8ea2ae;box-sizing:border-box"></div>
<div class="b" style="left:858px;top:1037px;width:232px;height:15px;background:linear-gradient(#f4fafd,#cfe1ea);border:1px solid #8ea2ae;box-sizing:border-box"></div>
<div class="b" style="left:1089px;top:1037px;width:15px;height:15px;background:linear-gradient(#f4f8fb,#d5e2ea);border:1px solid #8ea2ae;box-sizing:border-box"></div>

<!-- icons -->
<svg class="b" style="left:0;top:0" width="1921" height="1057" viewBox="0 0 1921 1057">
<!-- logo -->
<path d="M14 12v14M24 8v18" stroke="#7a2" fill="none"/><rect x="10.5" y="15.5" width="6" height="8" fill="#e8605c" stroke="#f88"/><rect x="20.5" y="11" width="6" height="12" fill="#3ecf3e" stroke="#9f9"/>
<!-- chain -->
<g fill="none" stroke="#666" stroke-width="1.4"><ellipse cx="484" cy="11" rx="3" ry="5"/><ellipse cx="484" cy="21" rx="3" ry="5"/><path d="M484 13v6"/></g>
<circle cx="666" cy="14" r="4" fill="none" stroke="#222" stroke-width="1.2"/><path d="M663 18l-3 4" stroke="#111" stroke-width="2"/>
<!-- top right -->
<path d="M1642 8v20" stroke="#ccb" stroke-width="1.5"/><path d="M1643 9c5-2 8 2 12 0v11c-4 2-7-2-12 0z" fill="#ffd21e" stroke="#c9a400"/><circle cx="1656" cy="23" r="4.5" fill="#d9232a"/><rect x="1672" y="8" width="17" height="17" fill="#222"/><rect x="1675" y="9" width="11" height="7" fill="#eee"/><rect x="1676" y="19" width="9" height="6" fill="#ddd"/>
<path d="M1697 14l3 3 3-3" fill="none" stroke="#222" stroke-width="1.4"/>
<rect x="1712" y="4" width="25" height="24" fill="#b7c8d3"/><circle cx="1725" cy="16" r="10" fill="#2a6fd6"/><path d="M1719 13.5h3l4-3.5v12l-4-3.5h-3z" fill="#fff"/><path d="M1728 13a4 4 0 010 6M1730 11a7 7 0 010 10" stroke="#fff" fill="none"/>
<path d="M1748 8h3v5h3l-4.500 6-4.500-6h3z" fill="#e02020"/><rect x="1750" y="15" width="11" height="9" fill="#f2c21a" stroke="#555"/><path d="M1753 15v-4a3.500 3.500 0 017 0v4" fill="none" stroke="#aaa" stroke-width="1.400"/><path d="M1762 19l4 5h-2v3h-4v-3h-2z" fill="#22a022"/>
<rect x="1780" y="10" width="14" height="15" fill="#a8e8a8" stroke="#8a9" transform="rotate(-4 1787 17)"/><path d="M1778 16v-5a3 3 0 013-3h7M1796 19v5a3 3 0 01-3 3h-7" fill="none" stroke="#555" stroke-width="1.500"/><path d="M1774 15h8l-4 4zM1792 20h8l-4-4z" fill="#555"/>
<rect x="1810" y="9" width="14" height="15" fill="#223"/><path d="M1812 12h10M1812 15h10M1812 18h10" stroke="#7c7" stroke-width="1"/><rect x="1810" y="20" width="14" height="4" fill="#7c9a7c"/>
<g stroke="#8fa3b0" fill="none" stroke-width="1.3"><path d="M1836 11h11v3h-11zM1841 14v9"/><rect x="1853" y="10" width="11" height="12" stroke-dasharray="2 1"/><path d="M1855 20l6-7"/><path d="M1869 16h12M1874 12v8M1878 12v8" stroke-width="2"/><path d="M1885 23h10" stroke-width="2.400"/><path d="M1901 10l10 12M1911 10l-10 12" stroke-width="2"/></g>

<!-- toolbar -->
<path d="M13 90l3-7 11-9 4 5-10 10z" fill="#fff" stroke="#111" stroke-width="1.3"/><path d="M25 75.500l2-1.500 4 5-2 2z" fill="#111"/><path d="M11 93h19" stroke="#111" stroke-width="1.800"/>
<rect x="33.500" y="71.500" width="25" height="25" rx="2" fill="#b4c3cd" stroke="#9aabb6"/><path d="M43 76v15l3.500-3.500 3 6 2-1-3-6h5z" fill="#ccd7de" stroke="#222"/>
<circle cx="70" cy="81" r="5.500" fill="#eef4f8" stroke="#222" stroke-width="1.3"/><path d="M74 85l6 6" stroke="#222" stroke-width="2.400"/>
<g transform="rotate(-45 98 83)"><rect x="86" y="79" width="24" height="8" fill="#eee" stroke="#888"/><path d="M90 79v4M94 79v3M98 79v4M102 79v3M106 79v4" stroke="#888"/></g>
<g fill="#1a5fd0"><path d="M124 73l3 4h-6zM124 93l3-4h-6zM116 83l4-3v6zM133 83l-4-3v6z"/></g><circle cx="124" cy="83" r="2.500" fill="#111"/><path d="M124 76v14M118 83h12" stroke="#1a5fd0"/>
<rect x="142.500" y="75.500" width="10" height="13" fill="#f6f6f6" stroke="#bbb"/><rect x="147.500" y="80.500" width="10" height="13" fill="#f6f6f6" stroke="#aaa"/><path d="M150 84h5M150 87h5M150 90h5" stroke="#aaa"/>
<path d="M169 75l15 16" stroke="#555" stroke-width="3.500"/><path d="M185 76l-14 15" stroke="#777" stroke-width="3"/><path d="M178 73l8-1 1 6-6 2z" fill="#111"/><circle cx="170" cy="77" r="3.500" fill="none" stroke="#444" stroke-width="1.500"/>
<rect x="195" y="75" width="14" height="3" fill="#888"/><path d="M196 78h12l-1 15h-10z" fill="#ccc" stroke="#555"/><path d="M200 80v11M204 80v11" stroke="#555"/>
<path d="M218 78h16" stroke="#111"/><path d="M224 78c3 0 4 3 4 6 0 3 1 5 3 6h-14c2-1 3-3 3-6 0-3 1-6 4-6z" fill="#f8dc2a" stroke="#a88c00"/><path d="M229 76l5 5M234 76l-5 5" stroke="#2a44d0"/><path d="M232 83v9l2-2 2 4 1-1-2-3h3z" fill="#eee" stroke="#444"/>
<path d="M254 75c3 0 4 3 4 7 0 3 2 5 4 7h-16c2-2 4-4 4-7 0-4 1-7 4-7z" fill="#f8dc2a" stroke="#a88c00"/><rect x="250" y="89" width="8" height="2" fill="#c9a400"/><path d="M246 77c-1 1-2 3-1 5M262 77c1 1 2 3 1 5" stroke="#999" fill="none"/>
<circle cx="275.500" cy="88" r="2.500" fill="none" stroke="#222"/><circle cx="286.500" cy="78" r="2.500" fill="none" stroke="#222"/><path d="M277 86l8-6" stroke="#222"/><path d="M281 93.500h9" stroke="#111" stroke-dasharray="1.500 2"/>
<path d="M296 94l21-21" stroke="#111" stroke-width="1.300"/><path d="M322 94l21-21" stroke="#2aaa2a" stroke-width="2"/><path d="M348 94l21-21" stroke="#ee1a1a" stroke-width="2"/><path d="M373 84h22" stroke="#111" stroke-width="1.500"/>
<circle cx="408" cy="84" r="2.500" fill="#fff" stroke="#2aaa2a"/><path d="M411 84h9" stroke="#2aaa2a" stroke-width="2"/><circle cx="434" cy="84" r="2.500" fill="#fff" stroke="#ee1a1a"/><path d="M437 84h10" stroke="#ee1a1a" stroke-width="2"/>
<path d="M462.500 73v22" stroke="#111"/>
<path d="M479 84l18-6M479 88l18-6M479 91l18-6" stroke="#e8a0a0" stroke-width="1.500"/><path d="M480 91l18-6" stroke="#6cc06c" stroke-width="1.500"/><path d="M476 92v5M473.500 94.500h5M489 80v5M486.500 82.500h5M497 84v5M494.500 86.500h5" stroke="#1030e0"/>
<path d="M508 78h12M508 81h12" stroke="#222"/><rect x="508" y="83" width="13" height="3" fill="#f8c030"/><rect x="508" y="86" width="13" height="2" fill="#f07080"/><rect x="508" y="88" width="13" height="2" fill="#80a0f0"/><path d="M522 92h4M521 85v10M521 85h5" stroke="#1030e0" stroke-width="1.800" fill="none"/>
<path d="M534 87l14-14 3 3-14 14z" fill="#dde" opacity=".8"/><path d="M537 82l9-9" stroke="#6cc06c" stroke-width="2"/><path d="M541 86l8-8" stroke="#e8a0a0" stroke-width="2"/><path d="M536 76v5M533.500 78.500h5M534 89v5M531.500 91.500h5M544 89v5M541.500 91.500h5" stroke="#1030e0"/>
<rect x="558.500" y="76.500" width="15" height="17" fill="#eaf3fb" stroke="#4a8ad8"/><text x="566" y="90" font-family="Liberation Serif,serif" font-size="14" font-weight="bold" text-anchor="middle" fill="#111">T</text>
<path d="M588 77h8v8h4l-8 10-8-10h4z" fill="#e01515"/><path d="M614 95v-8h-4l8-10 8 10h-4v8z" fill="#1c9c2a"/>
<path d="M636 85l5 7 8-16" fill="none" stroke="#36c036" stroke-width="3.500"/><path d="M661 76l15 15M676 76l-15 15" stroke="#e81010" stroke-width="5"/>
<ellipse cx="696" cy="83" rx="9" ry="6.500" fill="#f6d8c8" stroke="#ee9050" stroke-width="1.300"/><path d="M704 74v6M701 77h6M687 88v6M684 91h6" stroke="#1030e0"/>
<rect x="716.500" y="77.500" width="14" height="12" fill="#dde8f4" stroke="#4488dd"/><path d="M730 74v6M727 77h6M715 87v6M712 90h6" stroke="#1030e0"/>
<path d="M748 76l8 13h-15z" fill="#aedcae" stroke="#3a9a6a"/><path d="M748 72v6M745 75h6M741 87v5M738 89.500h5M756 87v5M753 89.500h5" stroke="#1030e0"/>
<path d="M764 90l5-10 3 6 3-12 4 12 3-6 3 10" fill="none" stroke="#6688ee"/><path d="M773 72v5M770.500 74.500h5M765 86v5M762.500 88.500h5M777 86v5M774.500 88.500h5M785 84v5M782.500 86.500h5" stroke="#1030e0"/>
<rect x="787.500" y="71.500" width="25" height="25" rx="2" fill="#b4c3cd" stroke="#9aabb6"/><path d="M792 76v12l3-2.500 2 4 2-1-2-4h4z" fill="#eee" stroke="#222"/><path d="M799 79a7 7 0 110 9" fill="none" stroke="#1a30d0" stroke-width="2"/><path d="M795 76l5 4-4 3z" fill="#1a30d0"/>
<rect x="813.500" y="71.500" width="25" height="25" rx="2" fill="#b4c3cd" stroke="#9aabb6"/><path d="M820 92V83a6 6 0 0112 0v9" fill="none" stroke="#d42a2a" stroke-width="4"/><rect x="818" y="89" width="4" height="3" fill="#eee"/><rect x="830" y="89" width="4" height="3" fill="#eee"/>
<rect x="839.500" y="71.500" width="25" height="25" rx="2" fill="#b4c3cd" stroke="#9aabb6"/><path d="M844 76v12l3-2.500 2 4 2-1-2-4h4z" fill="#eee" stroke="#222"/><rect x="848" y="82" width="12" height="10" fill="#e8a818" stroke="#8a5a00"/><path d="M851 82v-4a4 4 0 018 0v3" fill="none" stroke="#aaa" stroke-width="1.500"/>
<path d="M868 77h20" stroke="#e01515" stroke-width="2.400"/><path d="M868 91h20" stroke="#1fa02a" stroke-width="2.400"/><path d="M870 87l5-5 4 3 6-7" fill="none" stroke="#1fa02a"/><path d="M870 84l6-4 4 3" fill="none" stroke="#e8605c"/>
<path d="M895 74l19 6" stroke="#e01515" stroke-width="2"/><path d="M895 94l19-6" stroke="#1fa02a" stroke-width="2.400"/><path d="M895 74v20" stroke="#1fa02a" stroke-width="1.500"/><path d="M898 76l4 14M902 78l4 11M907 79l2 8" stroke="#e01515"/>

<!-- ticker circles -->
<g fill="#fff" stroke="#777"><circle cx="1192" cy="84" r="3.500"/><circle cx="1339" cy="84" r="3.500"/><circle cx="1491" cy="84" r="3.500"/><circle cx="1633" cy="84" r="3.500"/><circle cx="1779" cy="84" r="3.500"/><circle cx="540" cy="116" r="3.500" fill="none"/></g>

<!-- tab bar icons -->
<path d="M8.500 112v16M16 108v16" stroke="#5a3" fill="none" transform="translate(0,-2)"/><rect x="5.500" y="113.500" width="6" height="8" fill="#e8605c" stroke="#a33"/><rect x="13.500" y="109.500" width="6" height="11" fill="#3ecf3e" stroke="#272"/>
<g fill="none" stroke="#555"><ellipse cx="34" cy="111" rx="2.800" ry="4"/><ellipse cx="34" cy="118" rx="2.800" ry="4"/></g><path d="M31 121l3 3 4-5" stroke="#1a60d0" stroke-width="2" fill="none"/>
<g fill="#111"><path d="M104 115h8l-4 4zM163 115h8l-4 4zM238 115h8l-4 4z"/></g>
<rect x="257.500" y="110.500" width="11" height="12" fill="#f4f7f9" stroke="#889"/><path d="M263 112.500v1.500M263 115.500v5" stroke="#555" stroke-width="1.400"/>
<path d="M1229 110a6 6 0 00-11 1l-2-2v5h5l-2-2a4 4 0 017 1z" fill="#ee5a5a"/><path d="M1218 118a6 6 0 0011 2l1.500 2v-6h-5l2 2a4 4 0 01-7-1z" fill="#22a022"/>
<g stroke="#aab6bd" fill="none" stroke-width="1.500"><path d="M1240 124h10" stroke-width="2.200"/><rect x="1257" y="110" width="9" height="11"/><path d="M1273 110l10 11M1283 110l-10 11" stroke-width="2"/></g>

<!-- order panel icons -->
<rect x="729" y="133" width="17" height="17" rx="2" fill="#fff" stroke="#777"/><path d="M733 147l7-7c-1-2 0-5 3-5l-1 3 2 1 1-2c1 3-2 5-4 4l-7 7z" fill="#fff" stroke="#222"/>
<rect x="729" y="154" width="17" height="14" rx="2" fill="#a8b4bb"/><path d="M731 157h13M731 160h13" stroke="#eee" stroke-dasharray="1.500 1"/><path d="M734 164h7" stroke="#eee" stroke-width="1.500"/>
<g fill="none" stroke="#777"><ellipse cx="816" cy="152" rx="3.500" ry="5"/><ellipse cx="816" cy="162" rx="3.500" ry="5"/><path d="M811 156.500h10" stroke-width="1"/></g>
<rect x="881.500" y="144.500" width="27" height="27" rx="2" fill="#eef2f5" stroke="#9aa8b1"/><path d="M885 147h12l4 4v17h-16z" fill="#fff" stroke="#aaa"/><path d="M887 148h4v4h3l-5 6-5-6h3z" fill="#e02020"/><path d="M887 170v-4h-3l5-6 5 6h-3v4z" fill="#14a014"/><rect x="894.500" y="158.500" width="11" height="11" fill="#ddd" stroke="#777"/><path d="M894 164h12" stroke="#777"/>
<rect x="916.500" y="144.500" width="27" height="27" rx="2" fill="#eef2f5" stroke="#9aa8b1"/><path d="M920 147h12l4 4v17h-16z" fill="#fff" stroke="#aaa"/><path d="M922 158v-4h-3l5-6 5 6h-3v4z" fill="#14a014"/><path d="M922 160h4v4h3l-5 6-5-6h3z" fill="#e02020"/><rect x="929.500" y="158.500" width="11" height="11" fill="#ddd" stroke="#777"/><path d="M929 164h12" stroke="#777"/>
<rect x="1249.500" y="144.500" width="27" height="27" rx="2" fill="#eef2f5" stroke="#9aa8b1"/><path d="M1253 147h12l4 4v17h-16z" fill="#fff" stroke="#aaa"/><path d="M1255 148h4v4h3l-5 6-5-6h3z" fill="#e02020"/><path d="M1255 170v-4h-3l5-6 5 6h-3v4z" fill="#14a014"/><rect x="1263.500" y="158.500" width="11" height="11" fill="#ddd" stroke="#777"/><path d="M1266 161l6 6M1272 161l-6 6" stroke="#666"/>
<path d="M972 148h13l4 4v10h-17z" fill="#fff"/><rect x="970" y="160" width="11" height="11" fill="#e8454b" stroke="#f47"/><rect x="981" y="160" width="11" height="11" fill="#2fb42f" stroke="#6c6"/><path d="M975.500 163v4M973 165.500l2.500 3 2.500-3M986.500 169v-5M984 166l2.500-3 2.500 3" stroke="#fff" stroke-width="1.500" fill="none"/>
<path d="M1036 148h13l4 4v10h-17z" fill="#fff"/><rect x="1034" y="160" width="11" height="11" fill="#e8454b" stroke="#f47"/><rect x="1045" y="160" width="11" height="11" fill="#2fb42f" stroke="#6c6"/><path d="M1039.500 163v4M1037 165.500l2.500 3 2.500-3M1050.500 169v-5M1048 166l2.500-3 2.500 3" stroke="#fff" stroke-width="1.500" fill="none"/>

<!-- legend icons -->
<rect x="3.500" y="178.500" width="13" height="14" fill="#fff" stroke="#8aa"/><path d="M8 180h4v4h3l-5 6-5-6h3z" fill="#e02020"/>
<rect x="24.500" y="178.500" width="13" height="14" fill="#fff" stroke="#8aa"/><path d="M28 191v-5h-3l5-6 5 6h-3v5z" fill="#14a014"/>

<!-- right panel icons -->
<path d="M1300 112v16M1308 107v16" stroke="#372" fill="none" transform="translate(0,-1)"/><rect x="1296.500" y="114.500" width="6" height="8" fill="#e8605c" stroke="#b22"/><rect x="1304.500" y="108.500" width="7" height="12" fill="#3ecf3e" stroke="#272"/>
<path d="M1423 115h7l-3.500 4z" fill="#111"/>
<rect x="1439" y="108" width="14" height="13" fill="#fff"/><path d="M1439 110h14M1439 114h14M1439 118h14" stroke="#f0a030" stroke-width="2"/><path d="M1445 121h8l-4 3z" fill="#111"/><path d="M1436 107h6M1439 104v6" stroke="#ddd" stroke-width="1.500"/>
<path d="M1466 121l7-7c-1-3 1-6 4-5l-2 3 2 1 2-2c1 3-2 6-4 5l-7 7z" fill="#fff" stroke="#222"/>
<rect x="1753" y="108" width="14" height="5" fill="#f0a030"/><path d="M1758 113h4v7h3l-5 5-5-5h3z" fill="#1a6fd0"/>
<path d="M1782 116v-5h-3l5-5 5 5h-3v5z" fill="#1a6fd0"/><rect x="1778" y="116" width="14" height="5" fill="#f0a030"/>
<circle cx="1807" cy="116" r="8" fill="#f4f8fb" stroke="#8aa"/><path d="M1804 111l7 5-7 5z" fill="#111"/>
<rect x="1820" y="109" width="17" height="15" fill="#fff" stroke="#9ab"/><rect x="1821" y="110" width="7" height="13" fill="#9fb2bf"/><rect x="1830" y="110" width="6" height="6" fill="#9fb2bf"/><rect x="1830" y="117" width="6" height="6" fill="#9fb2bf"/>
<g fill="#fff" stroke="#9ab"><path d="M1846 116l12-6M1846 116l12 6" stroke-width="1.500"/><circle cx="1846" cy="116" r="3"/><circle cx="1858" cy="110" r="3"/><circle cx="1858" cy="122" r="3"/></g><path d="M1856 120h8l-4 4z" fill="#111"/>
<g stroke="#5d7484" fill="none" stroke-width="1.600"><path d="M1869 123h9" stroke-width="2.200"/><rect x="1885" y="110" width="9" height="11"/><path d="M1901 110l10 11M1911 110l-10 11" stroke-width="2"/></g>
<path d="M1294 140l4-4c-1-3 1-5 4-4l-2 2 1 2 2-1c1 3-2 5-4 4l-4 4z" fill="#fff"/>
<g fill="none" stroke="#555"><ellipse cx="1557" cy="322" rx="2" ry="2.500"/><ellipse cx="1557" cy="327" rx="2" ry="2.500"/></g>

<!-- bottom icons -->
<path d="M11 1049l5-9 2 6 3-6 3 3" fill="none" stroke="#444"/><path d="M18 1049l7-12 2 2-7 12z" fill="#f4c830" stroke="#b08000"/><path d="M8 1052h14" stroke="#2aaa2a" stroke-width="1.500"/>
<path d="M35 1043h7l-3.500 4zM80 1043h7l-3.500 4z" fill="#111"/>
<path d="M50 1042c4-6 8-4 11 0s7 4 11 0" fill="none" stroke="#e8605c"/><path d="M50 1046c4 3 8 1 11-3s7-6 11-2" fill="none" stroke="#2aaa2a"/><rect x="52" y="1049" width="3" height="5" fill="#2aaa2a"/><rect x="57" y="1047" width="3" height="7" fill="#2aaa2a"/><rect x="62" y="1050" width="3" height="4" fill="#e8605c"/><rect x="67" y="1048" width="3" height="6" fill="#2aaa2a"/>
<g fill="#fff" stroke="#fff"><path d="M97 1044l10-5M97 1044l10 5" stroke-width="1.500"/><circle cx="97" cy="1044" r="2.500"/><circle cx="107" cy="1039" r="2.500"/><circle cx="107" cy="1049" r="2.500"/></g>
<path d="M122 1036h-4v16h4" fill="none" stroke="#1c4f85" stroke-width="3"/><path d="M128 1036h4v16h-4" fill="none" stroke="#8fa8bb" stroke-width="3"/>
<path d="M192 1035h8l3 3v10h-11z" fill="#fff" stroke="#aaa"/><rect x="194" y="1041" width="13" height="9" rx="2" fill="#3a8be0"/><path d="M197 1050v4l4-4z" fill="#3a8be0"/><path d="M197 1045.500h7" stroke="#fff" stroke-dasharray="1.500 1.500"/>
<rect x="216" y="1035" width="11" height="11" fill="#fff" stroke="#1a60b0"/><rect x="221" y="1041" width="12" height="13" fill="#fff" stroke="#1a60b0" stroke-width="1.400"/><path d="M223 1052l3-6 2 3 3-5" stroke="#2aaa2a" fill="none"/><path d="M218 1041l3-3 3 2" stroke="#e8605c" fill="none"/>
<rect x="251" y="1037" width="6" height="12" fill="#3ecf3e" stroke="#272"/><path d="M254 1034v20" stroke="#272"/><rect x="242" y="1044" width="6" height="9" fill="#e8605c" stroke="#922"/><path d="M245 1051l7-7c-1-2 0-5 3-5l-1 3 2 1 1-2c1 3-2 5-4 4l-7 7z" fill="#fff" stroke="#222"/>
<path d="M271 1040l-4 4 4 4M275 1040l-4 4 4 4" fill="none" stroke="#5a7d92" stroke-width="1.300"/>
<path d="M288 1041v7l-3-3.500z" fill="#111"/><path d="M1096 1041v7l3-3.500z" fill="#111"/>
<rect x="1114" y="1037" width="15" height="13" fill="#fff" stroke="#999"/><rect x="1114" y="1036" width="15" height="5" fill="#3a6fc0"/><path d="M1120 1047h4M1118 1044h10" stroke="#e8605c"/><path d="M1124 1044h-6v-4l-6 6 6 6v-3h6z" fill="#5ac83a" transform="translate(-3,2)"/>
<path d="M1145 1048c2 4 8 4 10 1s-1-8-7-7v-3l-6 5 6 5v-3c2 0 3 1 2 3" fill="#8cb4dc"/>
<path d="M1180 1048c-2 4-8 4-10 1s1-8 7-7v-3l6 5-6 5v-3c-2 0-3 1-2 3" fill="#8cb4dc"/>
<circle cx="1199" cy="1040" r="6" fill="#ddd" stroke="#111" stroke-width="1.500"/><path d="M1203 1045l6 7" stroke="#111" stroke-width="3"/><path d="M1208 1035v10M1206 1037l2-2 2 2M1206 1043l2 2 2-2M1191 1053h9M1193 1051l-2 2 2 2M1198 1051l2 2-2 2" stroke="#1a30d0" fill="none"/>
<circle cx="1224" cy="1041" r="5.500" fill="#fff" stroke="#111" stroke-width="1.500"/><path d="M1221 1041h6" stroke="#1a30d0" stroke-width="2"/><path d="M1228 1045l6 7" stroke="#111" stroke-width="2.600"/>
<circle cx="1250" cy="1041" r="5.500" fill="#fff" stroke="#111" stroke-width="1.500"/><path d="M1247 1041h6M1250 1038v6" stroke="#1a30d0" stroke-width="2"/><path d="M1254 1045l6 7" stroke="#111" stroke-width="2.600"/>
<rect x="1270" y="1036" width="12" height="6" fill="#fff" stroke="#222"/><path d="M1272 1039h8" stroke="#222" stroke-dasharray="1.500 1"/><path d="M1276 1044v6M1273 1048l3 3 3-3" stroke="#1a60d0" fill="none" stroke-width="1.500"/>
</svg>

<!-- annotation -->
<div class="b" style="left:1168px;top:26px;width:750px;height:82px;border:2px solid #e00000;box-sizing:border-box"></div>
</body></html>
